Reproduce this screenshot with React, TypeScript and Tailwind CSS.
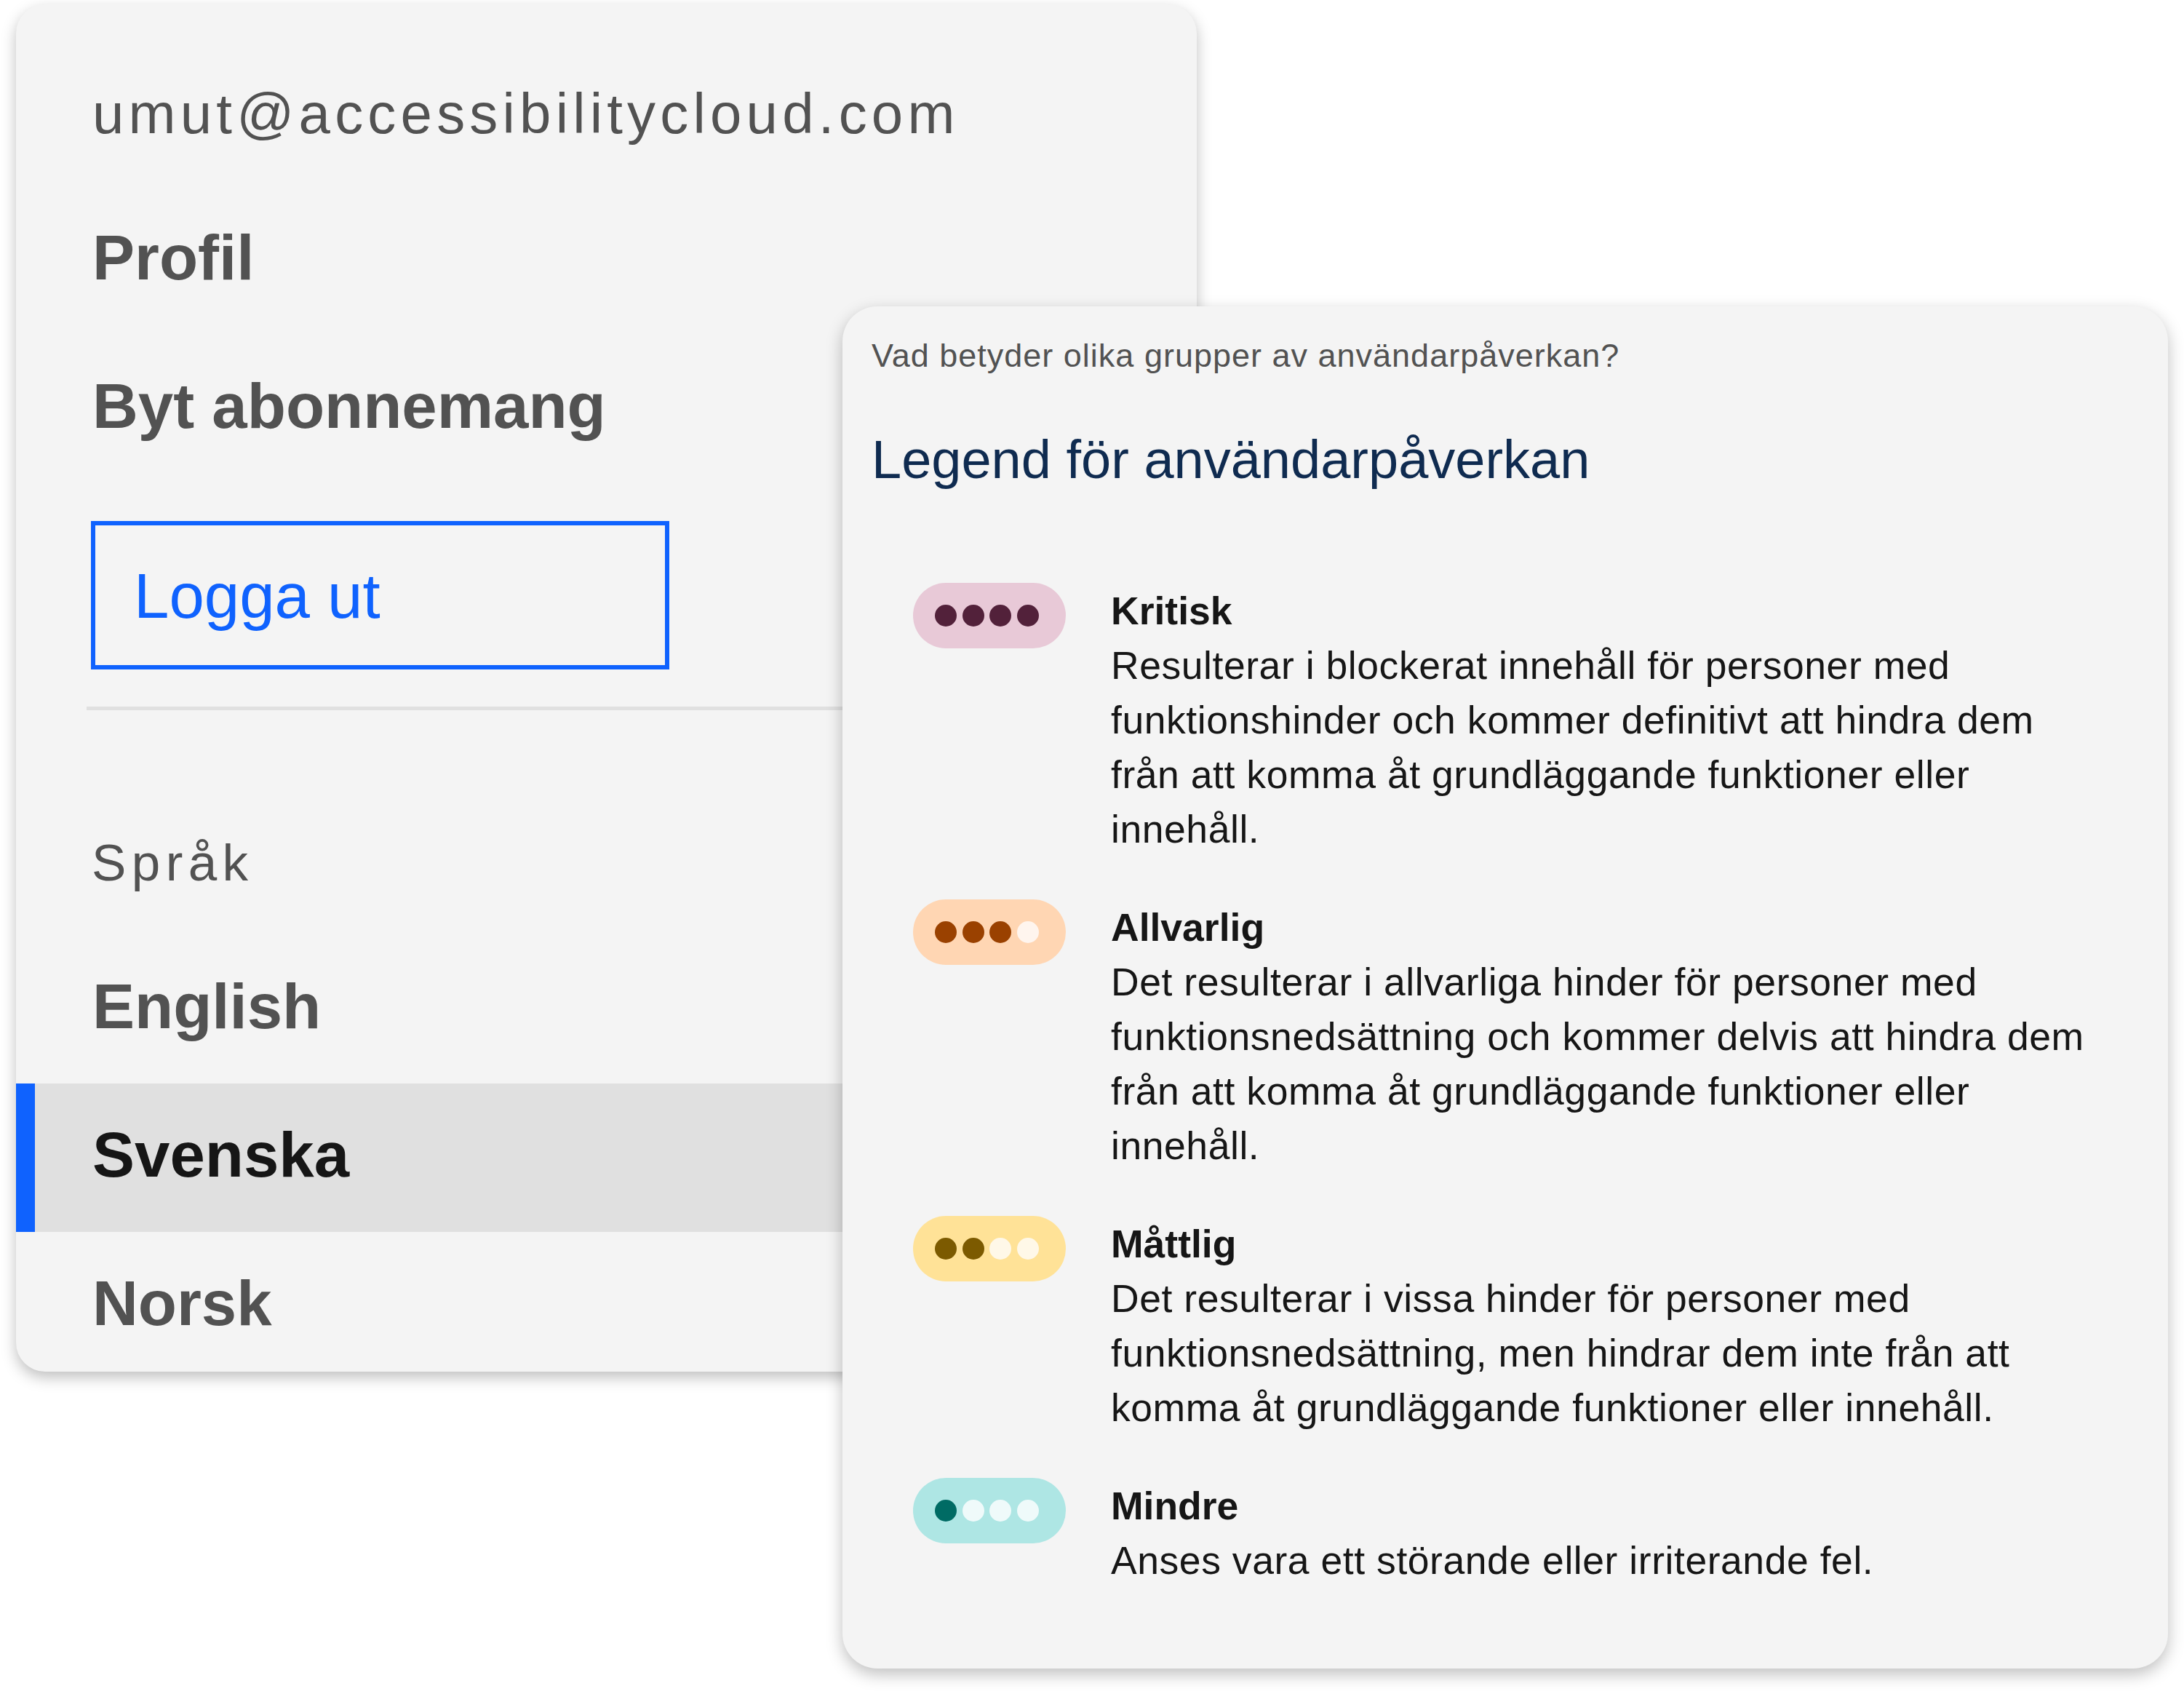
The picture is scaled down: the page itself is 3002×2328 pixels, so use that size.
import { FC } from "react";

type Level = {
  name: string;
  text: string;
  bg: string;
  dots: string[];
};

const levels: Level[] = [
  {
    name: "Kritisk",
    text: "Resulterar i blockerat innehåll för personer med funktionshinder och kommer definitivt att hindra dem från att komma åt grundläggande funktioner eller innehåll.",
    bg: "bg-[#e8c9d7]",
    dots: ["bg-[#52213a]", "bg-[#52213a]", "bg-[#52213a]", "bg-[#52213a]"],
  },
  {
    name: "Allvarlig",
    text: "Det resulterar i allvarliga hinder för personer med funktionsnedsättning och kommer delvis att hindra dem från att komma åt grundläggande funktioner eller innehåll.",
    bg: "bg-[#ffd6b3]",
    dots: ["bg-[#9a4100]", "bg-[#9a4100]", "bg-[#9a4100]", "bg-[#fff5ee]"],
  },
  {
    name: "Måttlig",
    text: "Det resulterar i vissa hinder för personer med funktionsnedsättning, men hindrar dem inte från att komma åt grundläggande funktioner eller innehåll.",
    bg: "bg-[#ffe297]",
    dots: ["bg-[#7c5a00]", "bg-[#7c5a00]", "bg-[#fff8e8]", "bg-[#fff8e8]"],
  },
  {
    name: "Mindre",
    text: "Anses vara ett störande eller irriterande fel.",
    bg: "bg-[#aee6e4]",
    dots: ["bg-[#006b64]", "bg-[#effafa]", "bg-[#effafa]", "bg-[#effafa]"],
  },
];

const MenuRow: FC<{ label: string; active?: boolean }> = ({ label, active }) => (
  <div
    className={`h-[204px] shrink-0 flex items-center pb-[9px] text-[87px] leading-[87px] font-bold ${
      active
        ? "bg-[#e0e0e0] border-l-[26px] border-[#0f62fe] pl-[79px] text-[#161616]"
        : "pl-[105px] text-[#525252]"
    }`}
  >
    {label}
  </div>
);

const Badge: FC<{ level: Level }> = ({ level }) => (
  <div className={`w-[210px] h-[90px] shrink-0 rounded-full ${level.bg} flex items-center gap-[7.5px] pl-[30px]`}>
    {level.dots.map((d, i) => (
      <span key={i} className={`w-[30px] h-[30px] rounded-full ${d}`} />
    ))}
  </div>
);

export default function App() {
  return (
    <div className="relative w-[3002px] h-[2328px] bg-white overflow-hidden font-['Liberation_Sans',Arial,sans-serif]">
      {/* Account menu */}
      <div className="ml-[22px] mt-[6px] w-[1623px] h-[1879px] rounded-[40px] bg-[#f4f4f4] shadow-[0_8px_20px_rgba(0,0,0,0.25)] overflow-hidden flex flex-col">
        <div className="pt-[111px] pl-[105px] text-[78px] leading-[78px] tracking-[6.2px] text-[#525252]">
          umut@accessibilitycloud.com
        </div>

        <div className="mt-[61px] flex flex-col">
          <MenuRow label="Profil" />
          <MenuRow label="Byt abonnemang" />
        </div>

        <button className="mt-[52px] ml-[103px] w-[795px] h-[204px] shrink-0 border-[6px] border-[#0f62fe] flex items-center pl-[53px] text-[87px] leading-[87px] text-[#0f62fe] text-left">
          Logga ut
        </button>

        <div className="mt-[51px] mx-[97px] h-[5px] shrink-0 bg-[#e0e0e0]" />

        <div className="mt-[174px] pl-[104px] text-[71px] leading-[71px] tracking-[7.4px] text-[#525252]">
          Språk
        </div>

        <div className="mt-[64px] flex flex-col">
          <MenuRow label="English" />
          <MenuRow label="Svenska" active />
          <MenuRow label="Norsk" />
        </div>
      </div>

      {/* Impact legend, lies over the menu */}
      <div className="absolute left-[1158px] top-[421px] w-[1822px] h-[1872px] rounded-[48px] bg-[#f4f4f4] shadow-[0_8px_22px_rgba(0,0,0,0.25)] pt-[45px] pl-[40px] pr-[77px]">
        <p className="text-[45px] leading-[45px] tracking-[1px] text-[#525252]">
          Vad betyder olika grupper av användarpåverkan?
        </p>
        <h2 className="mt-[84px] text-[74px] leading-[74px] text-[#0f2b50]">
          Legend för användarpåverkan
        </h2>

        <div className="mt-[133px] flex flex-col gap-[60px]">
          {levels.map((level) => (
            <div key={level.name} className="flex items-start">
              <div className="ml-[57px] mt-[-1px]">
                <Badge level={level} />
              </div>
              <div className="ml-[62px] w-[1376px] text-[53.5px] leading-[75px] text-[#161616]">
                <div className="font-bold">{level.name}</div>
                <div className="tracking-[0.55px]">{level.text}</div>
              </div>
            </div>
          ))}
        </div>
      </div>
    </div>
  );
}
